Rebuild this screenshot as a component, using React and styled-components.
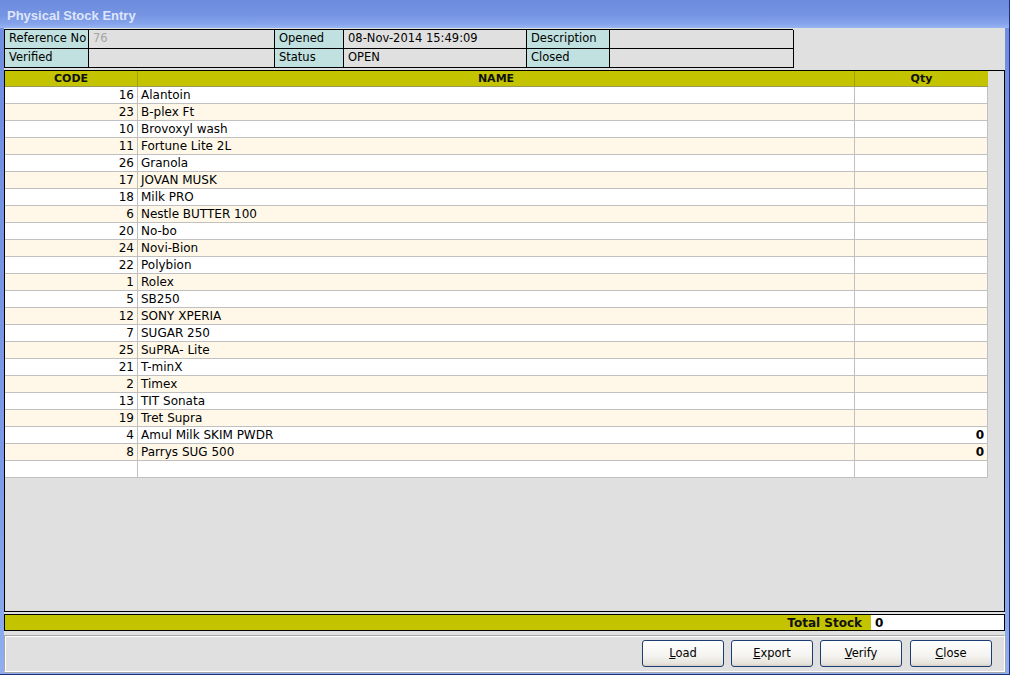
import React from "react";
import styled, { createGlobalStyle } from "styled-components";

const Global = createGlobalStyle`
  html, body { margin: 0; padding: 0; background: #fff; }
  * { box-sizing: border-box; }
`;

const FONT = `"DejaVu Sans", Verdana, sans-serif`;

const Window = styled.div`
  width: 1010px;
  height: 675px;
  display: flex;
  flex-direction: column;
  background: linear-gradient(180deg, #6f8de0 0%, #7c9ae6 70%, #8fadf0 100%);
  border-right: 1px solid #1d2f78;
  border-bottom: 1px solid #1d2f78;
  padding: 0 4px 2px 4px;
  font-family: ${FONT};
  font-size: 11.5px;
  color: #000;
`;

const TitleBar = styled.div`
  height: 28px;
  flex: none;
  display: flex;
  align-items: center;
  padding: 3px 0 0 7px;
  font-family: "Liberation Sans", Arial, sans-serif;
  font-weight: bold;
  font-size: 13px;
  color: #dfe6fb;
  margin: 0 -4px;
  background: linear-gradient(180deg, #6d8bdd 0%, #7594e2 55%, #86a4ec 85%, #98b5f3 100%);
`;

const Body = styled.div`
  flex: 1;
  display: flex;
  flex-direction: column;
  background: #e0e0e0;
  padding-top: 1px;
  min-height: 0;
`;

const InfoTable = styled.div`
  width: 789px;
  display: grid;
  grid-template-columns: 84px 186px 69px 183px 83px 184px;
  border-top: 1px solid #000;
  border-left: 1px solid #000;
  flex: none;
`;

const InfoCell = styled.div`
  height: 19px;
  border-right: 1px solid #000;
  border-bottom: 1px solid #000;
  padding: 0 0 0 4px;
  background: ${(p) => (p.$label ? "#c0e1df" : "#e0e0e0")};
  color: ${(p) => (p.$muted ? "#a5a5a5" : "#000")};
  white-space: nowrap;
  overflow: hidden;
  line-height: 16px;
`;

const Grid = styled.div`
  margin-top: 2px;
  flex: 1;
  min-height: 0;
  border: 1px solid #000;
  background: #e0e0e0;
  display: flex;
  flex-direction: column;
`;

const Row = styled.div`
  display: grid;
  grid-template-columns: 133px 717px 133px;
  width: 983px;
  background: ${(p) => (p.$alt ? "#fff8e8" : "#ffffff")};
`;

const HeadRow = styled(Row)`
  background: #c3c300;
`;

const HeadCell = styled.div`
  height: 16px;
  border-right: 1px solid #a0a000;
  border-bottom: 1px solid #9a9a55;
  text-align: center;
  font-weight: bold;
  font-size: 11px;
  line-height: 16px;
  color: #111;
  &:last-child { border-right: none; }
`;

const Cell = styled.div`
  height: 17px;
  border-right: 1px solid #c0c0c0;
  border-bottom: 1px solid #c0c0c0;
  font-size: 12px;
  line-height: 17px;
  white-space: nowrap;
  overflow: hidden;
  text-align: ${(p) => p.$align || "left"};
  padding: ${(p) => (p.$align === "right" ? "0 3px 0 0" : "0 0 0 3px")};
  font-weight: ${(p) => (p.$bold ? "bold" : "normal")};
`;

const TotalBar = styled.div`
  margin-top: 2px;
  flex: none;
  height: 17px;
  border: 1px solid #000;
  background: #c3c300;
  display: flex;
  align-items: stretch;
  justify-content: flex-end;
`;

const TotalLabel = styled.div`
  font-weight: bold;
  font-size: 12px;
  line-height: 15px;
  padding-right: 9px;
  padding-top: 1px;
  color: #111;
`;

const TotalValue = styled.div`
  width: 133px;
  background: #fff;
  font-weight: bold;
  font-size: 12px;
  line-height: 15px;
  padding: 1px 0 0 4px;
`;

const ButtonPanel = styled.div`
  margin-top: 4px;
  flex: none;
  height: 37px;
  border: 1px solid #a6a6a6;
  border-right-color: #fff;
  border-bottom-color: #fff;
  box-shadow: inset 1px 1px 0 #fff, 0 1px 0 #a6a6a6, 1px 0 0 #a6a6a6;
  display: flex;
  align-items: center;
  justify-content: flex-end;
  gap: 7px;
  padding: 0 12px 1px 0;
`;

const Button = styled.button`
  width: 82px;
  height: 27px;
  border: 1px solid #1c3d73;
  border-radius: 3px;
  background: linear-gradient(180deg, #ffffff 0%, #f4f3ef 60%, #e6e3dc 90%, #d6d1c6 100%);
  font-family: ${FONT};
  font-size: 11.5px;
  color: #000;
  padding: 0;
  margin-left: ${(p) => (p.$extra ? "1px" : "0")};
  u { text-decoration: underline; }
`;

const items = [
  [16, "Alantoin"],
  [23, "B-plex Ft"],
  [10, "Brovoxyl wash"],
  [11, "Fortune Lite 2L"],
  [26, "Granola"],
  [17, "JOVAN MUSK"],
  [18, "Milk PRO"],
  [6, "Nestle BUTTER 100"],
  [20, "No-bo"],
  [24, "Novi-Bion"],
  [22, "Polybion"],
  [1, "Rolex"],
  [5, "SB250"],
  [12, "SONY XPERIA"],
  [7, "SUGAR 250"],
  [25, "SuPRA- Lite"],
  [21, "T-minX"],
  [2, "Timex"],
  [13, "TIT Sonata"],
  [19, "Tret Supra"],
  [4, "Amul Milk SKIM PWDR", "0"],
  [8, "Parrys SUG 500", "0"],
  ["", "", ""],
];

const buttons = ["Load", "Export", "Verify", "Close"];

export default function App() {
  return (
    <>
      <Global />
      <Window>
        <TitleBar>Physical Stock Entry</TitleBar>
        <Body>
          <InfoTable>
            <InfoCell $label>Reference No</InfoCell>
            <InfoCell $muted>76</InfoCell>
            <InfoCell $label>Opened</InfoCell>
            <InfoCell>08-Nov-2014 15:49:09</InfoCell>
            <InfoCell $label>Description</InfoCell>
            <InfoCell></InfoCell>
            <InfoCell $label>Verified</InfoCell>
            <InfoCell></InfoCell>
            <InfoCell $label>Status</InfoCell>
            <InfoCell>OPEN</InfoCell>
            <InfoCell $label>Closed</InfoCell>
            <InfoCell></InfoCell>
          </InfoTable>
          <Grid>
            <HeadRow>
              <HeadCell>CODE</HeadCell>
              <HeadCell>NAME</HeadCell>
              <HeadCell>Qty</HeadCell>
            </HeadRow>
            {items.map(([code, name, qty], i) => (
              <Row key={i} $alt={i % 2 === 1}>
                <Cell $align="right">{code}</Cell>
                <Cell>{name}</Cell>
                <Cell $align="right" $bold>{qty || ""}</Cell>
              </Row>
            ))}
          </Grid>
          <TotalBar>
            <TotalLabel>Total Stock</TotalLabel>
            <TotalValue>0</TotalValue>
          </TotalBar>
          <ButtonPanel>
            {buttons.map((b, i) => (
              <Button key={b} $extra={i === 3}>
                <u>{b[0]}</u>
                {b.slice(1)}
              </Button>
            ))}
          </ButtonPanel>
        </Body>
      </Window>
    </>
  );
}
